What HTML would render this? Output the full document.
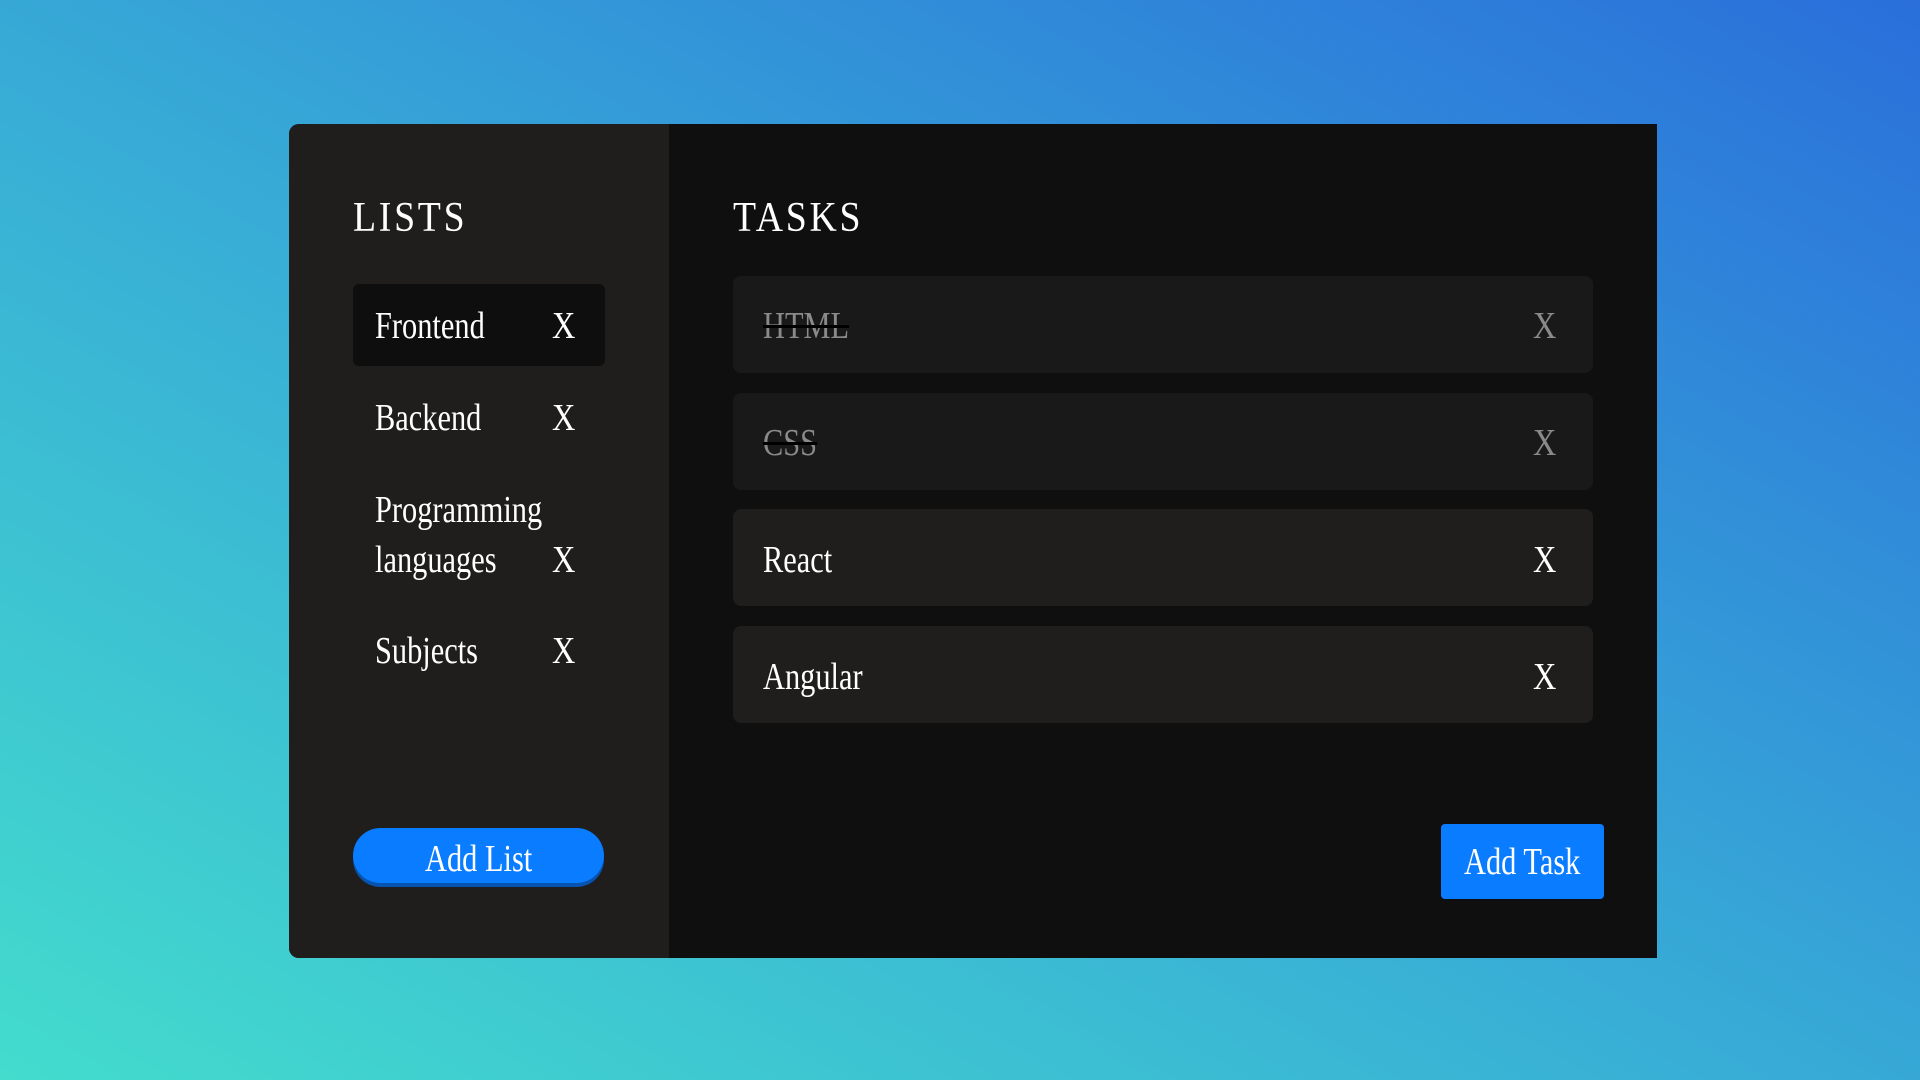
<!DOCTYPE html>
<html><head><style>
html,body{margin:0;width:1920px;height:1080px;overflow:hidden;}
body{background:linear-gradient(to top right,#43dccd 0%,#38aed6 45%,#2a6fdb 100%);font-family:"Liberation Serif",serif;color:#fff;position:relative;}
.card{position:absolute;left:289px;top:124px;width:1368px;height:834px;background:#100f10;border-radius:10px 0 0 10px;overflow:hidden;}
.side{position:absolute;left:0;top:0;width:380px;height:834px;background:#1f1e1d;}
.t{position:absolute;display:inline-block;transform:scaleX(.8);transform-origin:left center;white-space:nowrap;line-height:1;}
.h{font-size:42px;letter-spacing:3px;transform:scaleX(.9);}
.li{font-size:38px;}
.x{position:absolute;font-size:38px;line-height:1;transform:scaleX(.85);}
.act{position:absolute;left:64px;top:160px;width:252px;height:82px;background:#0e0e0e;border-radius:6px;}
.btnl{position:absolute;left:64px;top:704px;width:251px;height:55px;background:#0a7cff;border-radius:30px;box-shadow:0 4px 0 #0653b0;}
.row{position:absolute;left:444px;width:860px;height:97px;background:#1f1e1d;border-radius:8px;}
.row.d{background:#1a1919;}
.btnt{position:absolute;left:1152px;top:700px;width:163px;height:75px;background:#0a7cff;border-radius:4px;}
</style></head><body>
<div class="card">
 <div class="side">
  <span class="t h" style="left:64px;top:73px;">LISTS</span>
  <div class="act"></div>
  <span class="t li" style="left:86px;top:183px;">Frontend</span><span class="x" style="left:261px;top:183px;">X</span>
  <span class="t li" style="left:86px;top:275px;">Backend</span><span class="x" style="left:261px;top:275px;">X</span>
  <span class="t li" style="left:86px;top:367px;">Programming</span>
  <span class="t li" style="left:86px;top:417px;">languages</span><span class="x" style="left:261px;top:417px;">X</span>
  <span class="t li" style="left:86px;top:508px;">Subjects</span><span class="x" style="left:261px;top:508px;">X</span>
  <div class="btnl"></div>
  <span class="t li" style="left:136px;top:716px;">Add List</span>
 </div>
 <span class="t h" style="left:444px;top:73px;">TASKS</span>
 <div class="row d" style="top:152px;"></div>
 <span class="t li" style="left:474px;top:183px;color:#8a8a8a;text-decoration:line-through;text-decoration-color:#000;">HTML</span><span class="x" style="left:1242px;top:183px;color:#8a8a8a;">X</span>
 <div class="row d" style="top:269px;"></div>
 <span class="t li" style="left:474px;top:300px;color:#8a8a8a;text-decoration:line-through;text-decoration-color:#000;">CSS</span><span class="x" style="left:1242px;top:300px;color:#8a8a8a;">X</span>
 <div class="row" style="top:385px;"></div>
 <span class="t li" style="left:474px;top:417px;">React</span><span class="x" style="left:1242px;top:417px;">X</span>
 <div class="row" style="top:502px;"></div>
 <span class="t li" style="left:474px;top:534px;">Angular</span><span class="x" style="left:1242px;top:534px;">X</span>
 <div class="btnt"></div>
 <span class="t li" style="left:1175px;top:719px;">Add Task</span>
</div>
</body></html>
